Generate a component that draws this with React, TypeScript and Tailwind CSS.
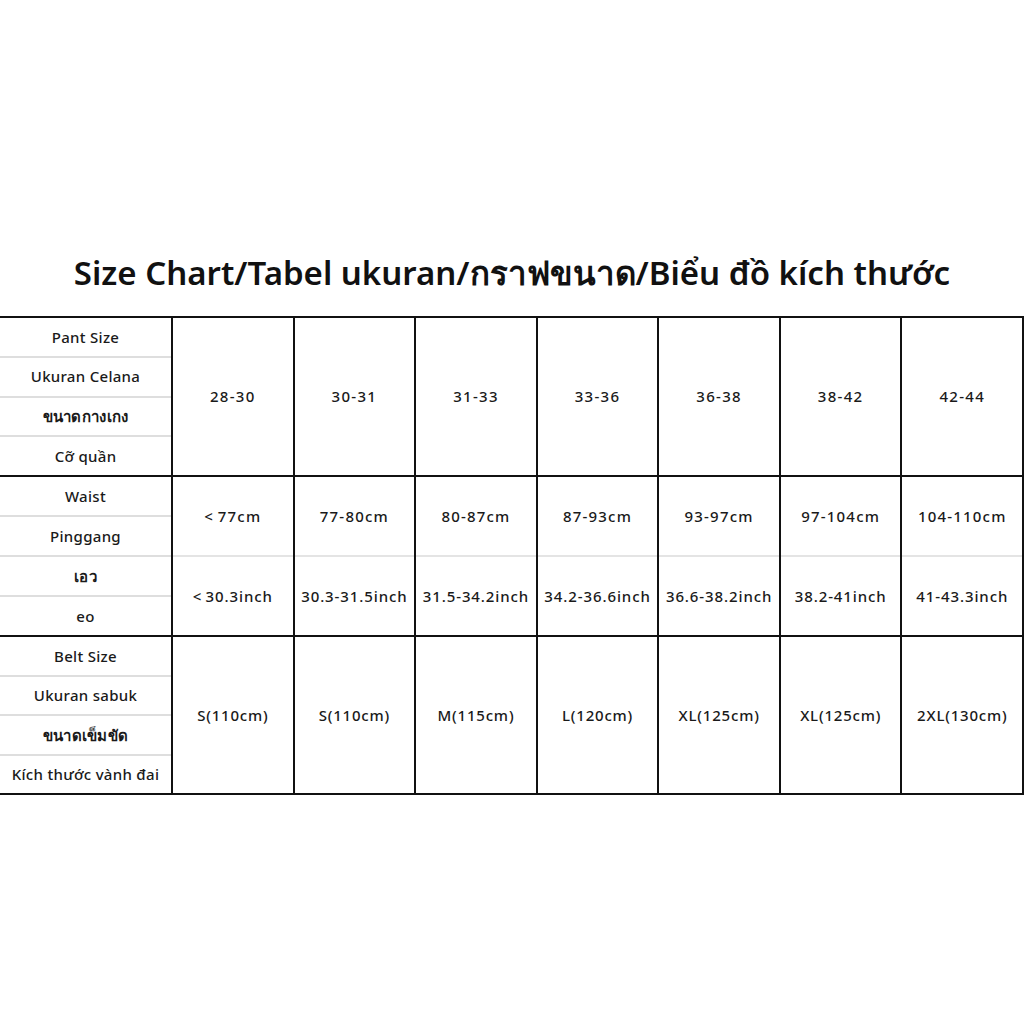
import React from "react";

const font = { fontFamily: '"Noto Sans", "Open Sans", sans-serif' };

const sizes = ["28-30", "30-31", "31-33", "33-36", "36-38", "38-42", "42-44"];
const cm = ["<77cm", "77-80cm", "80-87cm", "87-93cm", "93-97cm", "97-104cm", "104-110cm"];
const inch = ["<30.3inch", "30.3-31.5inch", "31.5-34.2inch", "34.2-36.6inch", "36.6-38.2inch", "38.2-41inch", "41-43.3inch"];
const belt = ["S(110cm)", "S(110cm)", "M(115cm)", "L(120cm)", "XL(125cm)", "XL(125cm)", "2XL(130cm)"];

function LeftCol({ labels }: { labels: string[] }) {
  return (
    <div className="w-[171px] shrink-0 flex flex-col divide-y-2 divide-[#dedede] tracking-[0.3px]">
      {labels.map((l, i) => (
        <div key={l} className={"flex-1 flex items-center justify-center whitespace-nowrap " + (i === 2 ? "font-bold" : "")}>
          {l}
        </div>
      ))}
    </div>
  );
}

function fmt(s: string) {
  if (s.startsWith("<")) return <>{"<"}&thinsp;{s.slice(1)}</>;
  return s;
}

export default function App() {
  return (
    <div className="w-[1024px] h-[1024px] bg-white text-[#1a1a1a]" style={font}>
      <div className="pt-[248px] h-[316px] flex justify-center">
        <h1 className="text-[33px] font-semibold leading-[50px] whitespace-nowrap text-[#111]">
          Size Chart/Tabel ukuran/<span className="font-bold">กราฟขนาด</span>/Biểu đồ kích thước
        </h1>
      </div>
      <div className="border-t-2 border-r-2 border-[#111] text-[15px] font-medium">
        {/* Pant size group */}
        <div className="flex h-[159px] border-b-2 border-[#111]">
          <LeftCol labels={["Pant Size", "Ukuran Celana", "ขนาดกางเกง", "Cỡ quần"]} />
          {sizes.map((s, i) => (
            <div key={i} className="flex-1 border-l-2 border-[#111] flex items-center justify-center whitespace-nowrap tracking-[1.3px]">
              {s}
            </div>
          ))}
        </div>
        {/* Waist group */}
        <div className="flex h-[160px] border-b-2 border-[#111]">
          <LeftCol labels={["Waist", "Pinggang", "เอว", "eo"]} />
          {cm.map((s, i) => (
            <div key={i} className="flex-1 border-l-2 border-[#111] flex flex-col divide-y-2 divide-[#e4e4e4]">
              <div className="flex-1 flex items-center justify-center whitespace-nowrap tracking-[1.2px]">{fmt(s)}</div>
              <div className="flex-1 flex items-center justify-center whitespace-nowrap tracking-[0.9px]">{fmt(inch[i])}</div>
            </div>
          ))}
        </div>
        {/* Belt group */}
        <div className="flex h-[158px] border-b-2 border-[#111]">
          <LeftCol labels={["Belt Size", "Ukuran sabuk", "ขนาดเข็มขัด", "Kích thước vành đai"]} />
          {belt.map((s, i) => (
            <div key={i} className="flex-1 border-l-2 border-[#111] flex items-center justify-center whitespace-nowrap tracking-[0.8px]">
              {s}
            </div>
          ))}
        </div>
      </div>
    </div>
  );
}
